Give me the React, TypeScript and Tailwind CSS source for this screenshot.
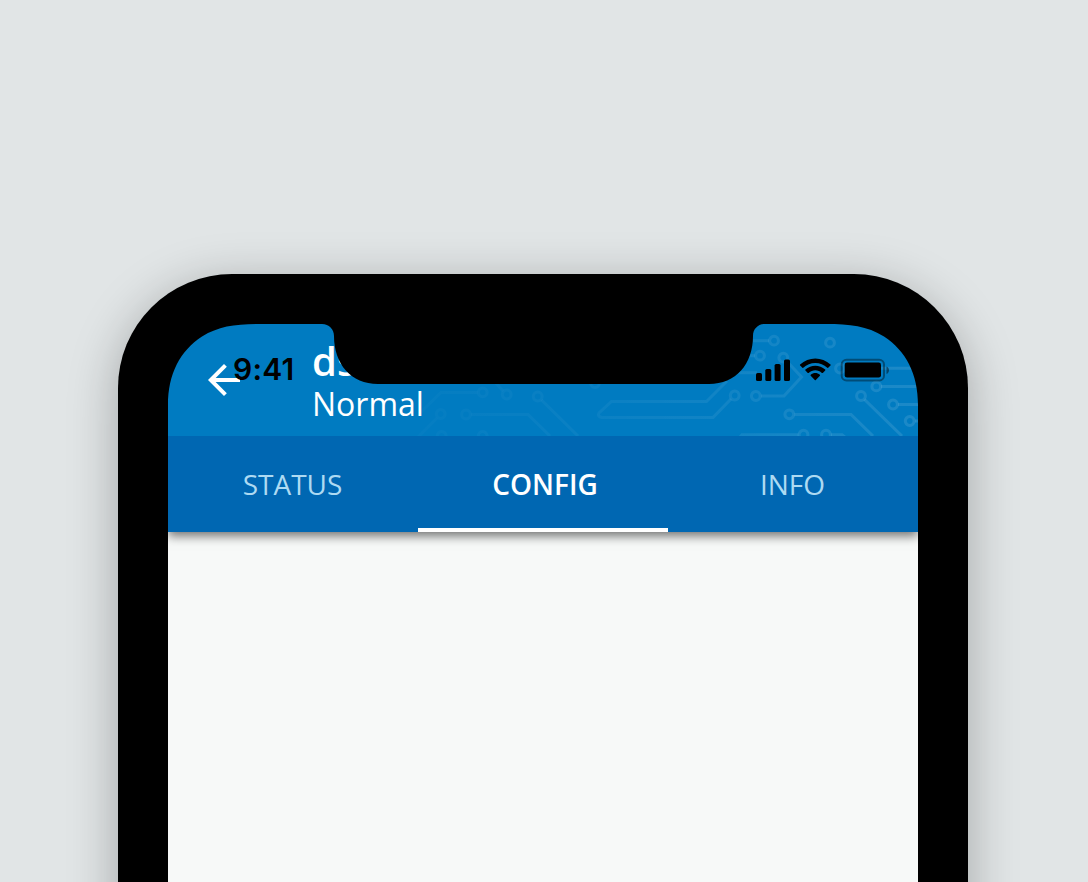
import type { ReactNode } from "react";

type Point = [number, number];

const nodes: Point[] = [
  [774, 340.7], [760, 355.7], [783.3, 357.7], [830, 342.7], [840, 368.5],
  [876.3, 386.4], [861, 396], [893, 404.5], [909.7, 421], [789.3, 414.3],
  [803.5, 434.7], [826, 434.7], [734.7, 395.5], [755.8, 396], [595, 383],
  [482.7, 392.3], [440.7, 414], [506.7, 394.5], [537.7, 396.5], [466, 414.5],
  [441.7, 436], [482.7, 436],
];

const traces = [
  "M769 340.7H750",
  "M755 355.7H745",
  "M787 361.5L801.5 377L784 396H761",
  "M845 368.3H918",
  "M881 386.4H918",
  "M864.5 399.5L902 436",
  "M898 404.5H918",
  "M915 421H918",
  "M794.5 414.5H851L873 436",
  "M798.5 434.7H742L739 438",
  "M831 434.7H842L846 438",
  "M731 399L713 417.5H602Q597 416.5 599 413L611.5 401.5H706.5L727 381",
  "M735 372.7H757",
  "M477.5 392.5H441L420 413",
  "M437 418L418 437",
  "M503 391L495 382",
  "M541.5 400L578 436",
  "M471 414.5H528L550 436",
];

function CircuitPattern() {
  return (
    <svg className="absolute inset-0 h-full w-full" viewBox="168 324 750 112" fill="none">
      <defs>
        <linearGradient id="trace" gradientUnits="userSpaceOnUse" x1="400" y1="0" x2="918" y2="0">
          <stop offset="0" stopColor="#fff" stopOpacity="0.015" />
          <stop offset="0.4" stopColor="#fff" stopOpacity="0.045" />
          <stop offset="1" stopColor="#fff" stopOpacity="0.11" />
        </linearGradient>
      </defs>
      <g stroke="url(#trace)" strokeWidth="3">
        {traces.map((d) => (
          <path key={d} d={d} />
        ))}
        {nodes.map(([x, y]) => (
          <path key={`${x}-${y}`} d={`M${x - 4.4} ${y}a4.4 4.4 0 1 0 8.8 0a4.4 4.4 0 1 0 -8.8 0.01`} />
        ))}
      </g>
    </svg>
  );
}

function Bezel() {
  return (
    <svg className="absolute left-0 top-0 h-[112px] w-[750px]" viewBox="168 324 750 112">
      <path d="M167 323H260V324C236 324 219 326 202 336.5C180 351 168 374 168 405H167Z" />
      <path d="M919 323H826V324C850 324 867 326 884 336.5C906 351 918 374 918 405H919Z" />
      <path d="M322 323V324C329 324 334 329 334 336C334 364 351 384 378 384H709C736 384 753 364 753 336C753 329 758 324 765 324V323Z" />
    </svg>
  );
}

function StatusIcons() {
  return (
    <svg className="absolute left-[586px] top-[30px] h-8 w-36" viewBox="754 354 144 32">
      <rect x="756" y="373" width="6" height="8" rx="1.6" />
      <rect x="765.3" y="369" width="6" height="12" rx="1.6" />
      <rect x="774.6" y="364" width="6" height="17" rx="1.6" />
      <rect x="784" y="359.5" width="6" height="21.5" rx="1.6" />
      <path d="M815.3 362.9C819.8 362.9 824 364.6 827.3 367.8C827.5 368 827.9 368 828.2 367.7L830.5 365.4C830.8 365.1 830.8 364.7 830.5 364.4C822 356.4 808.6 356.4 800.1 364.4C799.8 364.7 799.8 365.1 800.1 365.4L802.4 367.7C802.7 368 803.1 368 803.3 367.8C806.6 364.6 810.8 362.9 815.3 362.9Z" />
      <path d="M815.3 370.3C817.7 370.3 820.1 371.2 821.9 372.9C822.2 373.1 822.6 373.1 822.8 372.9L825.2 370.5C825.5 370.2 825.4 369.8 825.2 369.5C819.6 364.4 811 364.4 805.4 369.5C805.2 369.8 805.1 370.2 805.4 370.5L807.8 372.9C808 373.1 808.4 373.1 808.7 372.9C810.5 371.2 812.9 370.3 815.3 370.3Z" />
      <path d="M819.9 375.7C820.2 375.4 820.2 375 819.9 374.7C817.2 372.5 813.4 372.5 810.7 374.7C810.4 375 810.4 375.4 810.7 375.7L814.8 379.9C815.1 380.2 815.5 380.2 815.8 379.9Z" />
      <rect x="841.7" y="359.7" width="42.3" height="20.8" rx="4.8" fill="none" stroke="#000" strokeWidth="2" opacity="0.38" />
      <rect x="844.7" y="362.6" width="36.3" height="14.9" rx="2.3" />
      <path d="M886.5 366.5V374C888 373.3 889 371.9 889 370.2C889 368.5 888 367.1 886.5 366.5Z" opacity="0.45" />
    </svg>
  );
}

function Tab({ active = false, children }: { active?: boolean; children: ReactNode }) {
  return (
    <div
      className={
        active
          ? "flex h-full w-[250px] items-center justify-center border-b-4 border-white pl-1 pt-1 text-[28px] font-semibold text-white"
          : "flex h-full w-[250px] items-center justify-center border-b-4 border-transparent pr-px pt-1 text-[28px] text-[#addaf2]"
      }
    >
      {children}
    </div>
  );
}

export default function App() {
  return (
    <main className="flex h-[882px] w-[1088px] items-start overflow-hidden bg-[#e1e5e6] pl-[118px] pt-[274px] font-['Open_Sans',sans-serif]">
      <div className="h-[1000px] w-[850px] shrink-0 rounded-[114px] bg-black p-[50px] shadow-[0_10px_50px_rgba(0,0,0,0.28)]">
        <div className="relative h-[900px] overflow-hidden bg-[#f7f9f8]">
          <header className="relative z-10 flex h-[112px] bg-[#007bc1] pl-8 text-white">
            <CircuitPattern />
            <svg className="relative mt-8 size-12" viewBox="0 0 24 24" fill="currentColor">
              <path d="M20 11H7.83l5.59-5.59L12 4l-8 8 8 8 1.41-1.41L7.83 13H20v-2z" />
            </svg>
            <div className="relative ml-16 pt-[18px]">
              <h1 className="text-[40px] leading-[38px] font-semibold">ds</h1>
              <p className="mt-1 text-[32px] leading-10">Normal</p>
            </div>
          </header>
          <nav className="relative flex h-24 bg-[#0067b2] shadow-[0_4px_10px_rgba(0,0,0,0.55)]">
            <Tab>STATUS</Tab>
            <Tab active>CONFIG</Tab>
            <Tab>INFO</Tab>
          </nav>
          <div className="absolute inset-x-0 top-0 z-20 h-[112px]">
            <Bezel />
            <span className="absolute left-[65px] top-[27px] font-['Inter',sans-serif] text-[30px] leading-9 font-semibold tracking-[0.2px] text-black">
              9:41
            </span>
            <StatusIcons />
          </div>
        </div>
      </div>
    </main>
  );
}
